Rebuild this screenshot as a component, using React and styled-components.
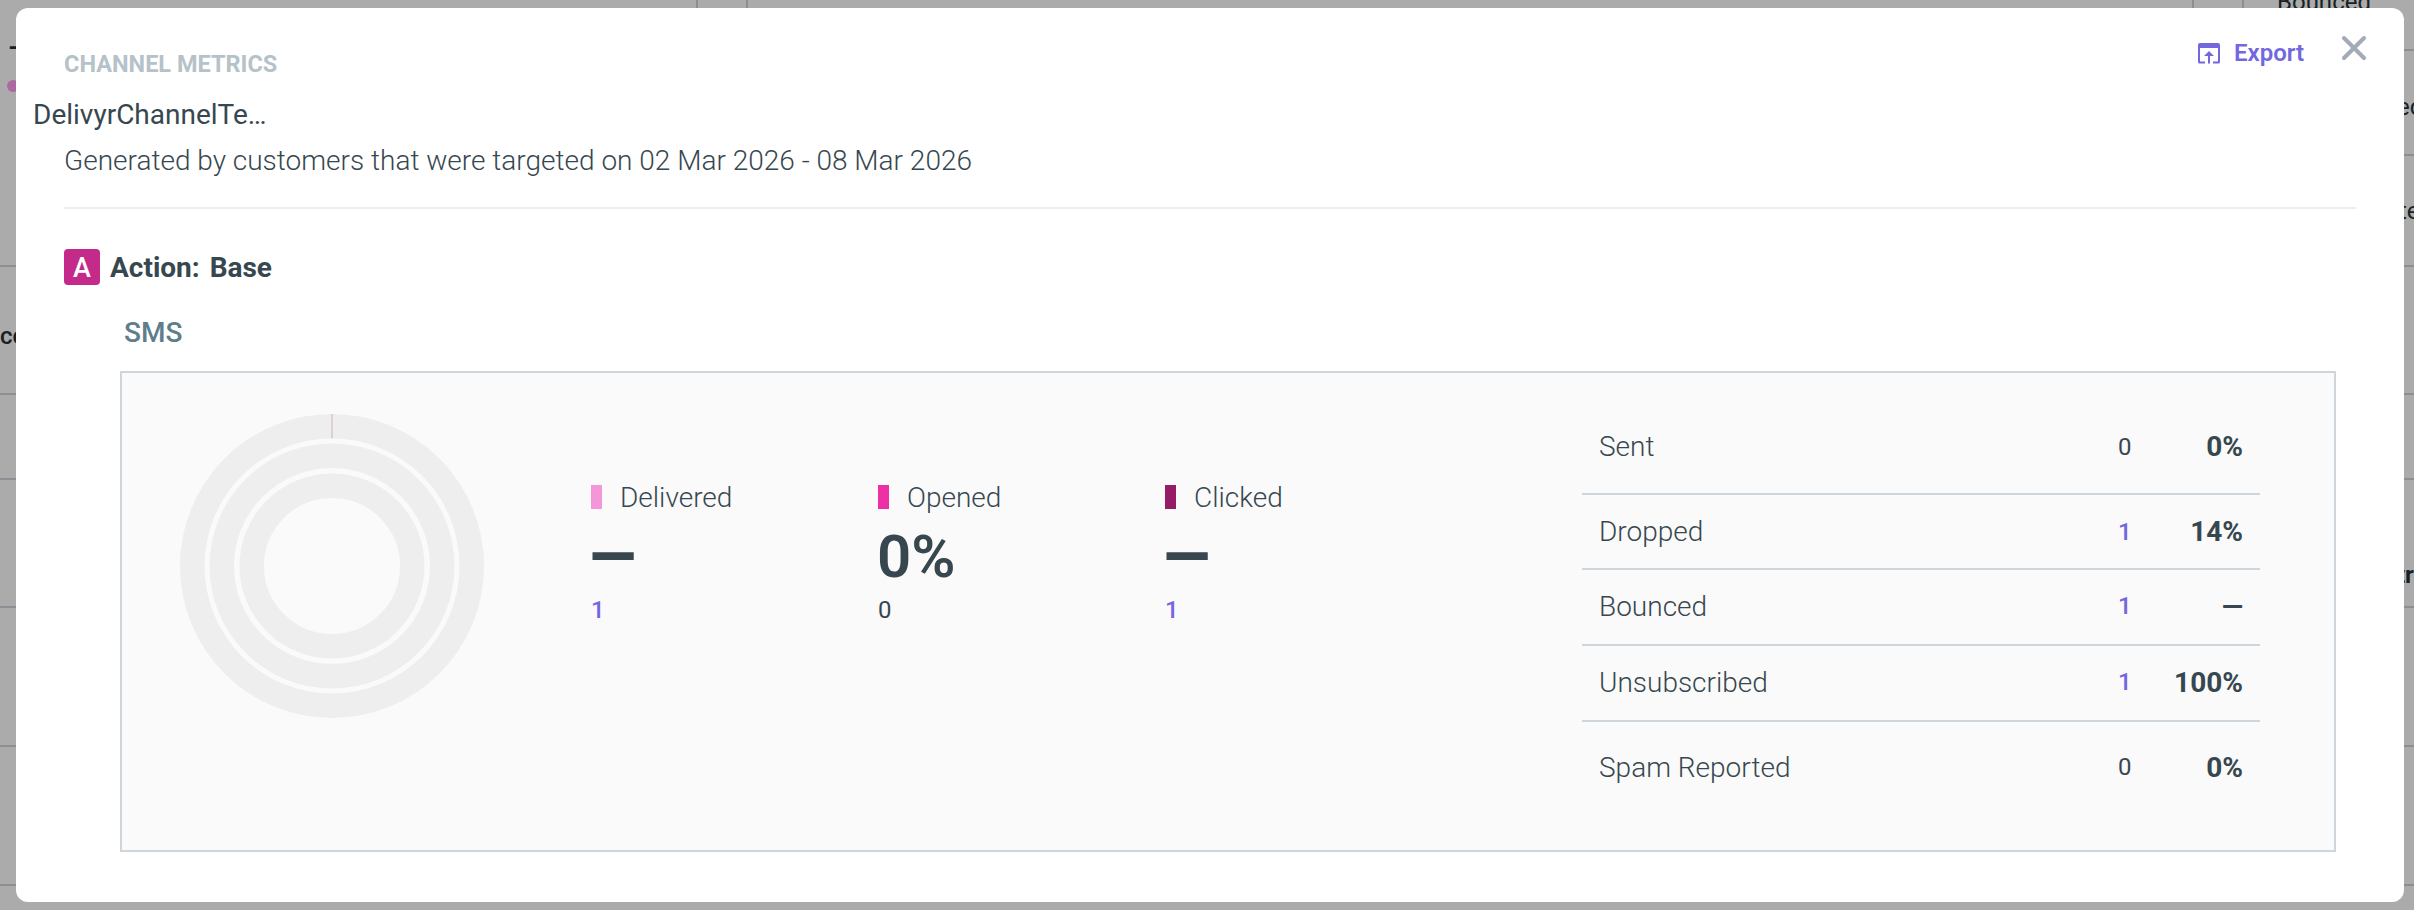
import React from "react";
import styled, { createGlobalStyle } from "styled-components";
import { X } from "lucide-react";

const Global = createGlobalStyle`
  html, body { margin: 0; padding: 0; height: 100%; overflow: hidden; }
  body { background: #fff; font-family: Roboto, "Liberation Sans", sans-serif; color: #37474f; }
  * { box-sizing: border-box; }
`;

/* ---------- page dimmed behind the dialog ---------- */
const Page = styled.div`
  position: relative;
  width: 2414px;
  height: 910px;
  overflow: hidden;
  background: #fff;
  display: grid;
  grid-template-columns: 16px 1fr 18px;
`;
const EdgeColumn = styled.div`
  display: flex;
  flex-direction: column;
  overflow: hidden;
`;
const EdgeRow = styled.div`
  flex: ${p => (p.$h ? `0 0 ${p.$h}px` : "1")};
  display: flex;
  flex-direction: column;
  justify-content: ${p => (p.$top ? "flex-start" : "center")};
  padding-top: ${p => p.$pad || 0}px;
  border-bottom: ${p => (p.$h ? "2px solid #cfd6db" : "0")};
`;
const EdgeText = styled.span`
  padding-left: ${p => p.$indent || 0}px;
  font-size: 24px;
  line-height: 24px;
  font-weight: ${p => p.$weight || 400};
  color: #263238;
  white-space: nowrap;
`;
const EdgeDot = styled.span`
  margin: 20px 0 0 7px;
  width: 12px;
  height: 12px;
  flex: none;
  border-radius: 50%;
  background: #ff9fef;
`;
const TopStrip = styled.div`
  display: flex;
  align-items: flex-end;
  height: 10px;
  padding-left: 680px;
  overflow: hidden;
`;
const TopCell = styled.div`
  flex: none;
  width: 52px;
  height: 10px;
  border-left: 2px solid #cfd6db;
  border-right: 2px solid #cfd6db;
`;
const TopSpacer = styled.div`
  flex: 1;
`;
const TopText = styled.span`
  flex: none;
  width: 152px;
  padding-left: 33px;
  margin-bottom: -4px;
  font-size: 24px;
  line-height: 24px;
  color: #263238;
  white-space: nowrap;
`;
const Backdrop = styled.div`
  position: absolute;
  inset: 0;
  background: rgba(0, 0, 0, 0.33);
`;

/* ---------- dialog ---------- */
const Dialog = styled.section`
  position: absolute;
  inset: 8px 10px 8px 16px;
  background: #fff;
  border-radius: 12px;
  padding: 43px 48px 0 48px;
`;
const HeaderRow = styled.header`
  display: flex;
  justify-content: space-between;
  height: 40px;
  margin: -16px -18px 0 0;
`;
const Actions = styled.div`
  display: flex;
  align-items: center;
  height: 36px;
`;
const ExportLink = styled.a`
  display: flex;
  align-items: center;
  gap: 13px;
  margin-right: 30px;
  font-size: 24px;
  font-weight: 600;
  color: #7367e0;
`;
const Close = styled.button`
  display: flex;
  padding: 0;
  border: 0;
  background: none;
  color: #a3abbb;
  margin-bottom: 10px;
`;
const Eyebrow = styled.div`
  margin-top: 17px;
  font-size: 23.5px;
  line-height: 24px;
  font-weight: 700;
  color: #b6c2c9;
  text-transform: uppercase;
`;
const CampaignName = styled.div`
  margin: 25px 0 0 -31px;
  width: 235px;
  font-size: 28px;
  line-height: 30px;
  color: #37474f;
  white-space: nowrap;
  overflow: hidden;
  text-overflow: ellipsis;
`;
const Generated = styled.p`
  margin: 16px 0 0;
  font-size: 28px;
  line-height: 30px;
  font-weight: 300;
  color: #37474f;
  padding-bottom: 31px;
  border-bottom: 2px solid #eeeeee;
`;
const ActionRow = styled.div`
  display: flex;
  align-items: center;
  gap: 10px;
  margin-top: 40px;
  height: 36px;
`;
const Badge = styled.span`
  display: flex;
  align-items: center;
  justify-content: center;
  width: 36px;
  height: 36px;
  padding-top: 2px;
  border-radius: 4px;
  background: #c42a8a;
  color: #fff;
  font-size: 27px;
  font-weight: 500;
`;
const ActionLabel = styled.h2`
  margin: 0;
  padding-top: 1px;
  font-size: 28px;
  font-weight: 700;
  word-spacing: 3px;
  color: #37474f;
`;
const ChannelTitle = styled.h3`
  margin: 33px 0 0 60px;
  font-size: 28px;
  line-height: 30px;
  font-weight: 500;
  color: #607d8b;
`;
const Panel = styled.div`
  display: flex;
  margin: 23px 0 0 56px;
  width: 2216px;
  height: 481px;
  background: #fafafa;
  border: 2px solid #cfd6db;
`;
const DonutSlot = styled.div`
  flex: none;
  margin: 41px 0 0 58px;
  width: 304px;
  height: 304px;
`;
const Legend = styled.div`
  flex: none;
  display: flex;
  margin: 112px 0 0 107px;
`;
const LegendItem = styled.div`
  width: 287px;
  height: 130px;
`;
const LegendLabel = styled.div`
  display: flex;
  align-items: center;
  gap: 18px;
  height: 24px;
  font-size: 28px;
  font-weight: 300;
  color: #37474f;
`;
const Swatch = styled.i`
  display: block;
  width: 11px;
  height: 24px;
  background: ${p => p.$color};
`;
const BigValue = styled.div`
  margin: 12px 0 0 -1px;
  font-size: 60px;
  line-height: 72px;
  height: 72px;
  font-weight: ${p => (p.$dash ? 900 : 600)};
  color: #37474f;
`;
const Count = styled.div`
  margin-top: 5px;
  font-size: 24px;
  line-height: 24px;
  font-weight: ${p => (p.$link ? 500 : 400)};
  color: ${p => (p.$link ? "#7367e0" : "#37474f")};
`;
const Stats = styled.div`
  margin: 0 74px 0 auto;
  width: 678px;
  padding-top: 25px;
  display: flex;
  flex-direction: column;
`;
const StatRow = styled.div`
  flex: none;
  display: flex;
  align-items: center;
  height: ${p => p.$h}px;
  padding: ${p => (p.$nudge > 0 ? 2 : 0)}px 17px ${p => (p.$nudge < 0 ? 2 : 0)}px;
  border-bottom: ${p => (p.$last ? "0" : "2px solid #cfd6db")};
`;
const StatName = styled.span`
  flex: 1;
  font-size: 28px;
  font-weight: 300;
  color: #37474f;
`;
const StatCount = styled.span`
  width: 30px;
  font-size: 24px;
  color: ${p => (p.$link ? "#7367e0" : "#37474f")};
  font-weight: ${p => (p.$link ? 500 : 400)};
`;
const StatPct = styled.span`
  width: 95px;
  text-align: right;
  font-size: 28px;
  font-weight: 700;
  color: #37474f;
`;

const ExportIcon = () => (
  <svg width="24" height="22" viewBox="0 0 24 22" fill="none">
    <path
      d="M3 1h18a2 2 0 0 1 2 2v17a1.500 1.500 0 0 1-1.500 1.500H16v-2h5V6H3v13.500h5v2H2.500A1.500 1.500 0 0 1 1 20V3a2 2 0 0 1 2-2Z"
      fill="currentColor"
    />
    <path d="M12 9l-5 5h4v7.500h2V14h4l-5-5Z" fill="currentColor" />
  </svg>
);

const Donut = () => (
  <svg width="304" height="304" viewBox="0 0 304 304" fill="none">
    <g stroke="#eeeeee" strokeWidth="24.500">
      <circle cx="152" cy="152" r="139.750" />
      <circle cx="152" cy="152" r="110.250" />
      <circle cx="152" cy="152" r="80.250" />
    </g>
    <rect x="151.500" y="0" width="1" height="24.500" fill="#c9b3c4" />
  </svg>
);

const legend = [
  { label: "Delivered", color: "#f596d8", value: "—", dash: true, count: "1", link: true },
  { label: "Opened", color: "#ee2fa5", value: "0%", count: "0" },
  { label: "Clicked", color: "#961c68", value: "—", dash: true, count: "1", link: true },
];

const stats = [
  { name: "Sent", count: "0", pct: "0%", h: 97, nudge: 1 },
  { name: "Dropped", count: "1", link: true, pct: "14%", h: 75 },
  { name: "Bounced", count: "1", link: true, pct: "—", h: 76, nudge: -1 },
  { name: "Unsubscribed", count: "1", link: true, pct: "100%", h: 76, nudge: -1 },
  { name: "Spam Reported", count: "0", pct: "0%", h: 90, last: true },
];

export default function App() {
  return (
    <Page>
      <Global />
      <EdgeColumn>
        <EdgeRow $h={267} $top $pad={36}>
          <EdgeText $indent={8} $weight={700}>–</EdgeText>
          <EdgeDot />
        </EdgeRow>
        <EdgeRow $h={128} $pad={12}>
          <EdgeText $weight={500}>cc</EdgeText>
        </EdgeRow>
        <EdgeRow $h={85} />
        <EdgeRow $h={128} />
        <EdgeRow $h={139} />
        <EdgeRow $h={139} />
        <EdgeRow />
      </EdgeColumn>
      <TopStrip>
        <TopCell />
        <TopSpacer />
        <TopCell />
        <TopText>Bounced</TopText>
      </TopStrip>
      <EdgeColumn>
        <EdgeRow $h={51} />
        <EdgeRow $h={105} $pad={9}>
          <EdgeText $indent={1}>ed</EdgeText>
        </EdgeRow>
        <EdgeRow $h={111}>
          <EdgeText $indent={3}>te</EdgeText>
        </EdgeRow>
        <EdgeRow $h={128} />
        <EdgeRow $h={85} />
        <EdgeRow $h={128} $pad={64}>
          <EdgeText $indent={1} $weight={700}>tr</EdgeText>
        </EdgeRow>
        <EdgeRow $h={139} />
        <EdgeRow $h={139} />
        <EdgeRow />
      </EdgeColumn>
      <Backdrop />
      <Dialog>
        <HeaderRow>
          <Eyebrow>Channel Metrics</Eyebrow>
          <Actions>
            <ExportLink>
              <ExportIcon />
              Export
            </ExportLink>
            <Close aria-label="Close">
              <X size={40} strokeWidth={2.4} />
            </Close>
          </Actions>
        </HeaderRow>
        <CampaignName>DelivyrChannelTest</CampaignName>
        <Generated>Generated by customers that were targeted on 02 Mar 2026 - 08 Mar 2026</Generated>
        <ActionRow>
          <Badge>A</Badge>
          <ActionLabel>Action: Base</ActionLabel>
        </ActionRow>
        <ChannelTitle>SMS</ChannelTitle>
        <Panel>
          <DonutSlot>
            <Donut />
          </DonutSlot>
          <Legend>
            {legend.map(item => (
              <LegendItem key={item.label}>
                <LegendLabel>
                  <Swatch $color={item.color} />
                  {item.label}
                </LegendLabel>
                <BigValue $dash={item.dash}>{item.value}</BigValue>
                <Count $link={item.link}>{item.count}</Count>
              </LegendItem>
            ))}
          </Legend>
          <Stats>
            {stats.map(s => (
              <StatRow key={s.name} $h={s.h} $last={s.last} $nudge={s.nudge || 0}>
                <StatName>{s.name}</StatName>
                <StatCount $link={s.link}>{s.count}</StatCount>
                <StatPct>{s.pct}</StatPct>
              </StatRow>
            ))}
          </Stats>
        </Panel>
      </Dialog>
    </Page>
  );
}
